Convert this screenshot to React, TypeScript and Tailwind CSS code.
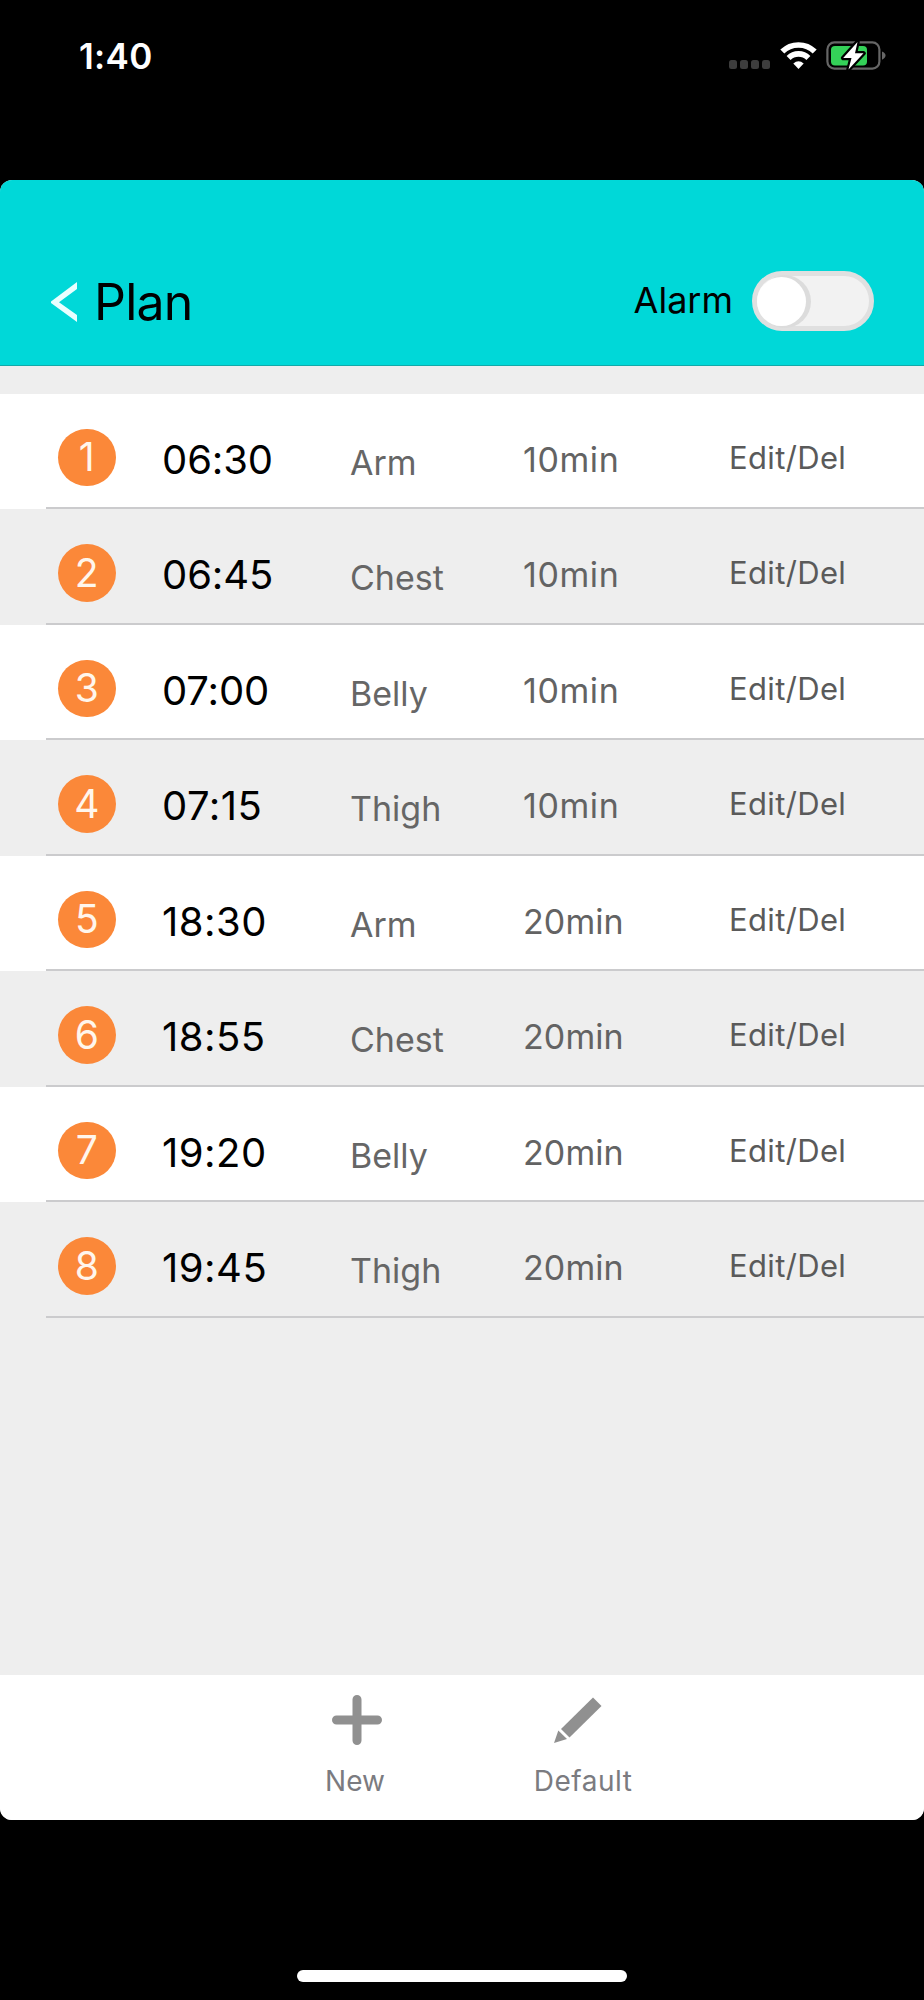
import React from "react";

const plan = [
  { time: "06:30", part: "Arm", duration: "10min" },
  { time: "06:45", part: "Chest", duration: "10min" },
  { time: "07:00", part: "Belly", duration: "10min" },
  { time: "07:15", part: "Thigh", duration: "10min" },
  { time: "18:30", part: "Arm", duration: "20min" },
  { time: "18:55", part: "Chest", duration: "20min" },
  { time: "19:20", part: "Belly", duration: "20min" },
  { time: "19:45", part: "Thigh", duration: "20min" },
];

function StatusBar() {
  return (
    <div className="flex h-[180px] shrink-0 items-start justify-between pl-[79px] pr-[38px] text-white">
      <div className="mt-[26px] text-[35px] font-semibold leading-[60px] tracking-[0.3px]">1:40</div>
      <div className="mt-[40px] flex items-start">
        <div className="mt-[20px] flex gap-[2.5px]">
          <span className="size-[8.5px] rounded-[2.5px] bg-[#3d3d3d]" />
          <span className="size-[8.5px] rounded-[2.5px] bg-[#3d3d3d]" />
          <span className="size-[8.5px] rounded-[2.5px] bg-[#3d3d3d]" />
          <span className="size-[8.5px] rounded-[2.5px] bg-[#3d3d3d]" />
        </div>
        <svg className="ml-[10px] mt-px" width="37" height="29" viewBox="0 0 37 29" fill="none" stroke="#fff" strokeWidth="5.6">
          <path d="M2.3 10.6 A23 23 0 0 1 34.7 10.6" />
          <path d="M8.6 17 A14 14 0 0 1 28.4 17" />
          <path d="M18.5 28 L13.3 22.4 Q18.5 18 23.7 22.4 Z" fill="#fff" stroke="none" />
        </svg>
        <svg className="ml-[9px]" width="60" height="32" viewBox="0 0 60 32">
          <rect x="1.4" y="2.4" width="52" height="26.2" rx="7" fill="none" stroke="#666" strokeWidth="2.2" />
          <rect x="5" y="6" width="36" height="19.5" rx="4" fill="#34d158" />
          <path d="M56 11.5 Q59.5 13 59.5 15.6 Q59.5 18.2 56 19.8 Z" fill="#666" />
          <path d="M31.5 2 L17.2 18 H25.5 L22.5 29.5 L37.5 13.3 H29 Z" fill="#fff" stroke="#000" strokeWidth="4.5" strokeLinejoin="round" paintOrder="stroke" />
        </svg>
      </div>
    </div>
  );
}

function Header() {
  return (
    <header className="flex h-[186px] shrink-0 items-start border-b border-[#12a9a9] bg-[#00d8d8] px-[50px]">
      <svg className="mt-[101px]" width="28" height="42" viewBox="0 0 28 42">
        <path d="M27 1 V8 L9 21.3 L27 34 V41 L1 22 V20.5 Z" fill="#e9ffff" />
      </svg>
      <h1 className="ml-[16px] mt-[92px] text-[50px] leading-[60px] tracking-[-0.8px] text-black">Plan</h1>
      <span className="ml-auto mt-[90px] text-[36px] leading-[60px] text-black">Alarm</span>
      <button className="ml-[19px] mt-[91px] flex h-[60px] w-[122px] items-center rounded-full border-[5px] border-[#e0e0e0] bg-[#f2f2f2]">
        <span className="size-[49px] shrink-0 rounded-full bg-white shadow-[3px_0_0_2px_#dcdcdc]" />
      </button>
    </header>
  );
}

function PlanList() {
  return (
    <ul>
      {plan.map((item, i) => (
        <li key={i} className="flex h-[115.5px] flex-col odd:bg-white even:bg-[#eeeeee]">
          <div className="grid flex-1 grid-cols-[104px_188px_173px_206px_1fr] items-start pl-[58px]">
            <span className="mt-[35px] flex size-[57.5px] items-center justify-center rounded-full bg-[#fb8839] text-[39px] text-[#fff6ec]">
              {i + 1}
            </span>
            <span
              className={`mt-[36px] text-[40px] leading-[60px] text-black ${
                item.time.includes("1") ? "tracking-[0.5px]" : "tracking-[-0.1px]"
              }`}
            >
              {item.time}
            </span>
            <span className="mt-[39px] text-[34px] leading-[60px] text-[#666]">{item.part}</span>
            <span
              className={`mt-[36px] text-[34px] leading-[60px] text-[#636363] ${
                item.duration.startsWith("1") ? "tracking-[0.6px]" : "tracking-[0.1px]"
              }`}
            >
              {item.duration}
            </span>
            <span className="mt-[34px] text-[31px] leading-[60px] tracking-[0.35px] text-[#5a5a5a]">Edit/Del</span>
          </div>
          <div className="ml-[46px] h-[2px] shrink-0 bg-[#cbcbcd]" />
        </li>
      ))}
    </ul>
  );
}

function Toolbar() {
  return (
    <footer className="flex h-[145px] shrink-0 items-start bg-white pl-[325px] text-[28px] leading-[40px] text-[#7b7b80]">
      <button className="flex w-[60px] flex-col items-center">
        <svg className="ml-[4px] mt-[20px]" width="50" height="50" viewBox="0 0 50 50" stroke="#909090" strokeWidth="9" strokeLinecap="round">
          <path d="M25 4.5 V45.5 M4.5 25 H45.5" />
        </svg>
        <span className="mt-[16px]">New</span>
      </button>
      <button className="ml-[146px] flex w-[104px] flex-col items-center">
        <svg className="mr-[12px] mt-[20px]" width="50" height="50" viewBox="0 0 50 50" fill="#909090">
          <path d="M41 2.5 L49.5 11 L17.5 42.5 L9 34 Z" />
          <path d="M6.3 35.5 L15 44 L2 48 Z" />
        </svg>
        <span className="mt-[16px] tracking-[0.5px]">Default</span>
      </button>
    </footer>
  );
}

export default function App() {
  return (
    <div className="flex h-[2000px] w-[924px] flex-col bg-black font-['Inter',sans-serif]">
      <StatusBar />
      <main className="flex h-[1640px] shrink-0 flex-col overflow-hidden rounded-[12px] bg-[#eeeeee]">
        <Header />
        <div className="h-[27.5px] shrink-0" />
        <PlanList />
        <div className="flex-1" />
        <Toolbar />
      </main>
      <div className="mx-auto mt-[150px] h-[12px] w-[330px] rounded-full bg-white" />
    </div>
  );
}
